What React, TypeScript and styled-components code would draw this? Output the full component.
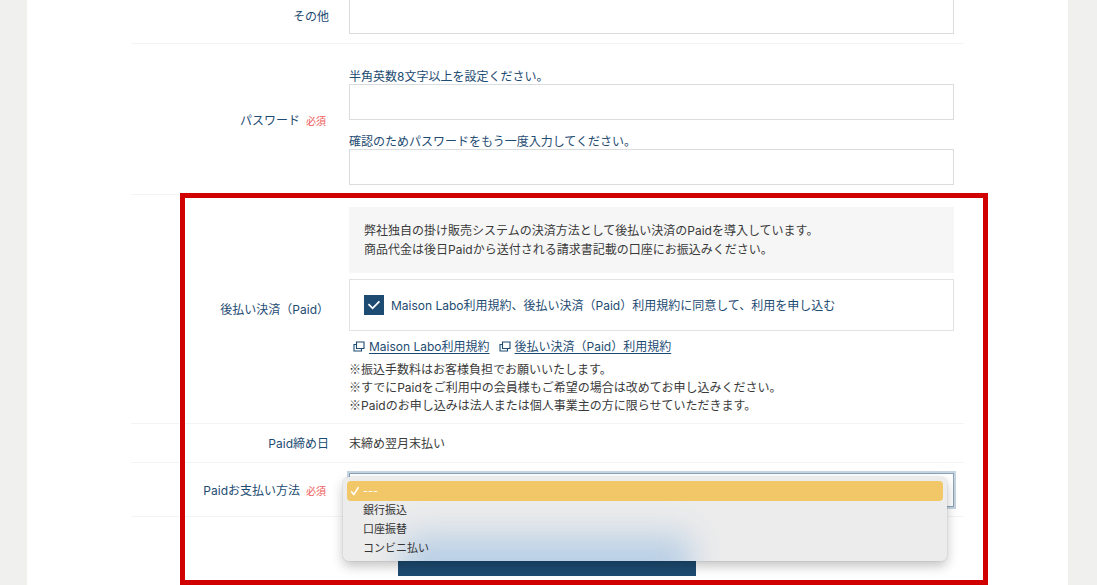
import React from 'react';
import styled, { createGlobalStyle } from 'styled-components';

const navy = '#1d4b72';

const GlobalStyle = createGlobalStyle`
  *, *::before, *::after { box-sizing: border-box; }
  body {
    margin: 0;
    background: #f0f0ee;
    color: #3a3a3a;
    font-family: Inter, "Noto Sans CJK JP", sans-serif;
    font-size: 12px;
    line-height: 19px;
  }
`;

const Sheet = styled.main`
  margin: 0 29px 0 27px;
  padding: 0 104px;
  background: #fff;
`;

const Row = styled.div`
  display: grid;
  grid-template-columns: 218px minmax(0, 1fr);
  border-bottom: 1px solid #f4f4f4;
`;

const LabelCell = styled.div<{ $top?: number; $bottom?: number }>`
  align-self: center;
  padding: ${(p) => p.$top ?? 0}px 20px ${(p) => p.$bottom ?? 0}px 0;
  text-align: right;
  color: ${navy};
`;

const Required = styled.span`
  margin: 0 3px 0 6px;
  font-size: 10px;
  color: #ee5a5a;
`;

const Field = styled.div<{ $top: number; $bottom: number }>`
  padding: ${(p) => p.$top}px 10px ${(p) => p.$bottom}px 0;
`;

const TextInput = styled.input<{ $open?: boolean }>`
  display: block;
  width: 100%;
  height: ${(p) => (p.$open ? 34 : 36)}px;
  padding: 0 10px;
  border: 1px solid #d9dddf;
  border-top-width: ${(p) => (p.$open ? 0 : 1)}px;
  border-radius: 0;
  background: #fff;
  font: inherit;
  outline: none;
`;

const Hint = styled.label`
  display: block;
  line-height: 14px;
  color: ${navy};

  input + & { margin-top: 15px; }
`;

const PaidSection = styled.section`
  position: relative;

  &::after {
    content: '';
    position: absolute;
    inset: -2px -24px 0 49px;
    border: 5px solid #d00000;
    pointer-events: none;
  }
`;

const Notice = styled.p`
  margin: 0;
  padding: 14px 15px;
  background: #f6f6f6;
`;

const Agreement = styled.label`
  display: flex;
  align-items: center;
  gap: 7px;
  height: 52px;
  margin-top: 6px;
  padding: 0 14px;
  border: 1px solid #e2e2e2;
  color: ${navy};
`;

const CheckWrap = styled.span`
  display: grid;
  place-items: center;

  > * { grid-area: 1 / 1; }
  svg { pointer-events: none; }
`;

const Checkbox = styled.input`
  appearance: none;
  width: 20px;
  height: 20px;
  margin: 0;
  border: 1px solid ${navy};
  background: #fff;

  &:checked { background: ${navy}; }
`;

const Links = styled.div`
  display: flex;
  flex-wrap: wrap;
  gap: 9px;
  margin-top: 6px;
  padding-left: 4px;
  line-height: 20px;
`;

const LinkItem = styled.span`
  display: flex;
  align-items: center;
  gap: 4px;
  color: ${navy};
`;

const TermsLink = styled.a`
  color: inherit;
  text-decoration: underline;
  text-underline-offset: 2px;
`;

const Notes = styled.ul`
  margin: 4px 0 0;
  padding: 0;
  list-style: none;
  line-height: 18px;
`;

const NoteMark = styled.span`
  font-family: "Noto Sans CJK JP", sans-serif;
  line-height: 1;
`;

const SelectField = styled(Field)`
  position: relative;
`;

const Select = styled.select`
  appearance: none;
  display: block;
  width: 100%;
  height: 34px;
  padding: 0 14px;
  border: 1px solid #8ba3b8;
  border-radius: 0;
  background: #fff;
  box-shadow: 0 0 0 2px #c7d5e1;
  font: inherit;
  outline: none;
`;

const MenuShadow = styled.div`
  position: absolute;
  z-index: 1;
  top: 14px;
  left: -6px;
  right: 17px;
  height: 84px;
  border-radius: 6px;
  box-shadow: 0 0 1px rgba(0, 0, 0, 0.4), 0 5px 12px rgba(0, 0, 0, 0.24);
`;

const Menu = styled.ul`
  position: absolute;
  z-index: 1;
  top: 14px;
  left: -6px;
  right: 17px;
  margin: 0;
  padding: 4px 4px 3px;
  overflow: hidden;
  border-radius: 6px;
  background: #ececec;
  list-style: none;
  font-size: 11px;

  &::before {
    content: '';
    position: absolute;
    left: 60px;
    right: 256px;
    bottom: -40px;
    height: 66px;
    background: #b9cfe5;
    filter: blur(16px);
  }
`;

const MenuItem = styled.li<{ $active?: boolean }>`
  position: relative;
  display: flex;
  align-items: center;
  height: ${(p) => (p.$active ? 20 : 19)}px;
  padding-left: 16px;
  border-radius: 4px;
  background: ${(p) => (p.$active ? '#f2c767' : 'transparent')};
  color: ${(p) => (p.$active ? '#fff' : '#333')};

  svg {
    position: absolute;
    left: 3px;
  }
`;

const SubmitArea = styled.div`
  display: flex;
  justify-content: center;
  padding: 20px 2px 9px 0;
`;

const SubmitButton = styled.button`
  width: 298px;
  height: 39px;
  border: 0;
  background: ${navy};
  color: #fff;
  font: inherit;
`;

const WindowsIcon = () => (
  <svg width="12" height="12" viewBox="0 0 12 12" fill="none" stroke="currentColor" aria-hidden="true">
    <path d="M3.5 1h7.500v6.500H3.500z" strokeWidth="1.1" />
    <path d="M3.5 3.500H1v6.500h7.500V7.500" strokeWidth="1.1" />
  </svg>
);

const options = ['---', '銀行振込', '口座振替', 'コンビニ払い'];

const notes = [
  '振込手数料はお客様負担でお願いいたします。',
  'すでにPaidをご利用中の会員様もご希望の場合は改めてお申し込みください。',
  'Paidのお申し込みは法人または個人事業主の方に限らせていただきます。',
];

export default function App() {
  return (
    <>
      <GlobalStyle />
      <Sheet>
        <form onSubmit={(e) => e.preventDefault()}>
          <Row>
            <LabelCell as="label" htmlFor="other" $bottom={11}>その他</LabelCell>
            <Field $top={0} $bottom={9}>
              <TextInput id="other" type="text" $open />
            </Field>
          </Row>
          <Row>
            <LabelCell $top={3}>
              パスワード<Required>必須</Required>
            </LabelCell>
            <Field $top={26} $bottom={9}>
              <Hint htmlFor="password">半角英数8文字以上を設定ください。</Hint>
              <TextInput id="password" type="password" />
              <Hint htmlFor="password-confirm">確認のためパスワードをもう一度入力してください。</Hint>
              <TextInput id="password-confirm" type="password" />
            </Field>
          </Row>
          <PaidSection>
            <Row>
              <LabelCell>後払い決済（Paid）</LabelCell>
              <Field $top={12} $bottom={8}>
                <Notice>
                  弊社独自の掛け販売システムの決済方法として後払い決済のPaidを導入しています。
                  <br />
                  商品代金は後日Paidから送付される請求書記載の口座にお振込みください。
                </Notice>
                <Agreement>
                  <CheckWrap>
                    <Checkbox type="checkbox" defaultChecked />
                    <svg width="14" height="12" viewBox="0 0 14 12" fill="none" stroke="#fff" strokeWidth="1.8" aria-hidden="true">
                      <path d="M1.5 5.2 5.6 9.3 12.4 2.4" />
                    </svg>
                  </CheckWrap>
                  <span>Maison Labo利用規約、後払い決済（Paid）利用規約に同意して、利用を申し込む</span>
                </Agreement>
                <Links>
                  <LinkItem>
                    <WindowsIcon />
                    <TermsLink href="#terms">Maison Labo利用規約</TermsLink>
                  </LinkItem>
                  <LinkItem>
                    <WindowsIcon />
                    <TermsLink href="#paid-terms">後払い決済（Paid）利用規約</TermsLink>
                  </LinkItem>
                </Links>
                <Notes>
                  {notes.map((note) => (
                    <li key={note}>
                      <NoteMark>※</NoteMark>
                      {note}
                    </li>
                  ))}
                </Notes>
              </Field>
            </Row>
            <Row>
              <LabelCell>Paid締め日</LabelCell>
              <Field $top={10} $bottom={9}>末締め翌月末払い</Field>
            </Row>
            <Row>
              <LabelCell as="label" htmlFor="payment" $top={3}>
                Paidお支払い方法<Required>必須</Required>
              </LabelCell>
              <SelectField $top={10} $bottom={9}>
                <Select id="payment" defaultValue="---">
                  {options.map((o) => (
                    <option key={o}>{o}</option>
                  ))}
                </Select>
                <MenuShadow />
                <Menu role="listbox" aria-label="Paidお支払い方法">
                  {options.map((o, i) => (
                    <MenuItem key={o} role="option" aria-selected={i === 0} $active={i === 0}>
                      {i === 0 && (
                        <svg width="10" height="10" viewBox="0 0 10 10" fill="none" stroke="#fff" strokeWidth="1.6" strokeLinecap="round" strokeLinejoin="round" aria-hidden="true">
                          <path d="M1.5 5.8 3.8 8.6 8.2 1.6" />
                        </svg>
                      )}
                      {o}
                    </MenuItem>
                  ))}
                </Menu>
              </SelectField>
            </Row>
            <SubmitArea>
              <SubmitButton type="submit" aria-label="確認" />
            </SubmitArea>
          </PaidSection>
        </form>
      </Sheet>
    </>
  );
}
